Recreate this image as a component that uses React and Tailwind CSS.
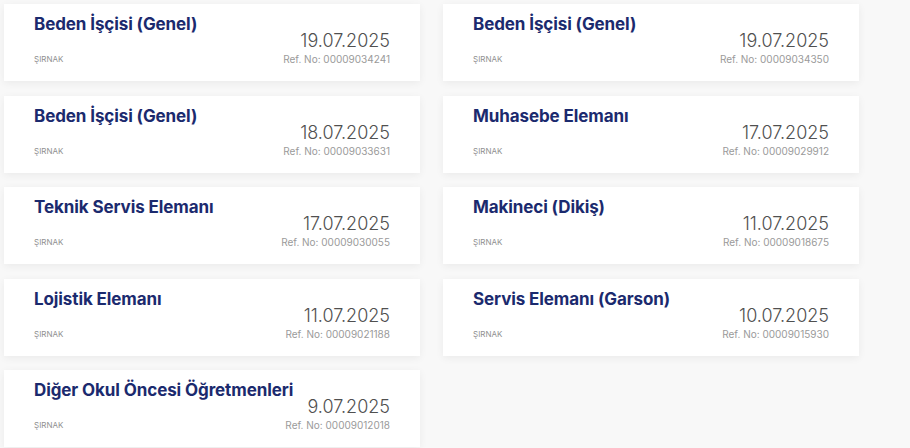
import React from 'react';

const ilanlar = [
    { title: 'Beden İşçisi (Genel)', date: '19.07.2025', ref: '00009034241' },
    { title: 'Beden İşçisi (Genel)', date: '19.07.2025', ref: '00009034350' },
    { title: 'Beden İşçisi (Genel)', date: '18.07.2025', ref: '00009033631' },
    { title: 'Muhasebe Elemanı', date: '17.07.2025', ref: '00009029912' },
    { title: 'Teknik Servis Elemanı', date: '17.07.2025', ref: '00009030055' },
    { title: 'Makineci (Dikiş)', date: '11.07.2025', ref: '00009018675' },
    { title: 'Lojistik Elemanı', date: '11.07.2025', ref: '00009021188' },
    { title: 'Servis Elemanı (Garson)', date: '10.07.2025', ref: '00009015930' },
    { title: 'Diğer Okul Öncesi Öğretmenleri', date: '9.07.2025', ref: '00009012018' },
];

const IlanKarti = ({ title, date, refNo }) => {
    return (
        <div className="h-[77px] bg-white shadow-[0_2px_8px_rgba(0,0,0,0.06)] px-[30px] pt-[8px] flex flex-col">
            <h3 className="text-[17px] leading-[24px] font-bold text-[#1b2a6e] tracking-[-0.1px]">{title}</h3>
            <div className="flex justify-between items-end -mt-[5px]">
                <span className="text-[8px] leading-[12px] text-[#8f8f8f]">ŞIRNAK</span>
                <div className="flex flex-col items-end">
                    <span className="text-[18px] leading-[20px] font-light text-[#505050]">{date}</span>
                    <span className="text-[10px] leading-[12px] text-[#9a9a9a] mt-[2px]">Ref. No: {refNo}</span>
                </div>
            </div>
        </div>
    );
};

const App = () => {
    return (
        <div className="min-h-screen w-full bg-[#f8f8f8] pl-[4px] pt-[4px]" style={{ fontFamily: 'Inter, "Noto Sans", sans-serif' }}>
            <div className="grid grid-cols-[416px_416px] gap-x-[23px] gap-y-[14.5px]">
                {ilanlar.map((ilan, i) => (
                    <IlanKarti key={i} title={ilan.title} date={ilan.date} refNo={ilan.ref} />
                ))}
            </div>
        </div>
    );
};

export default App;
